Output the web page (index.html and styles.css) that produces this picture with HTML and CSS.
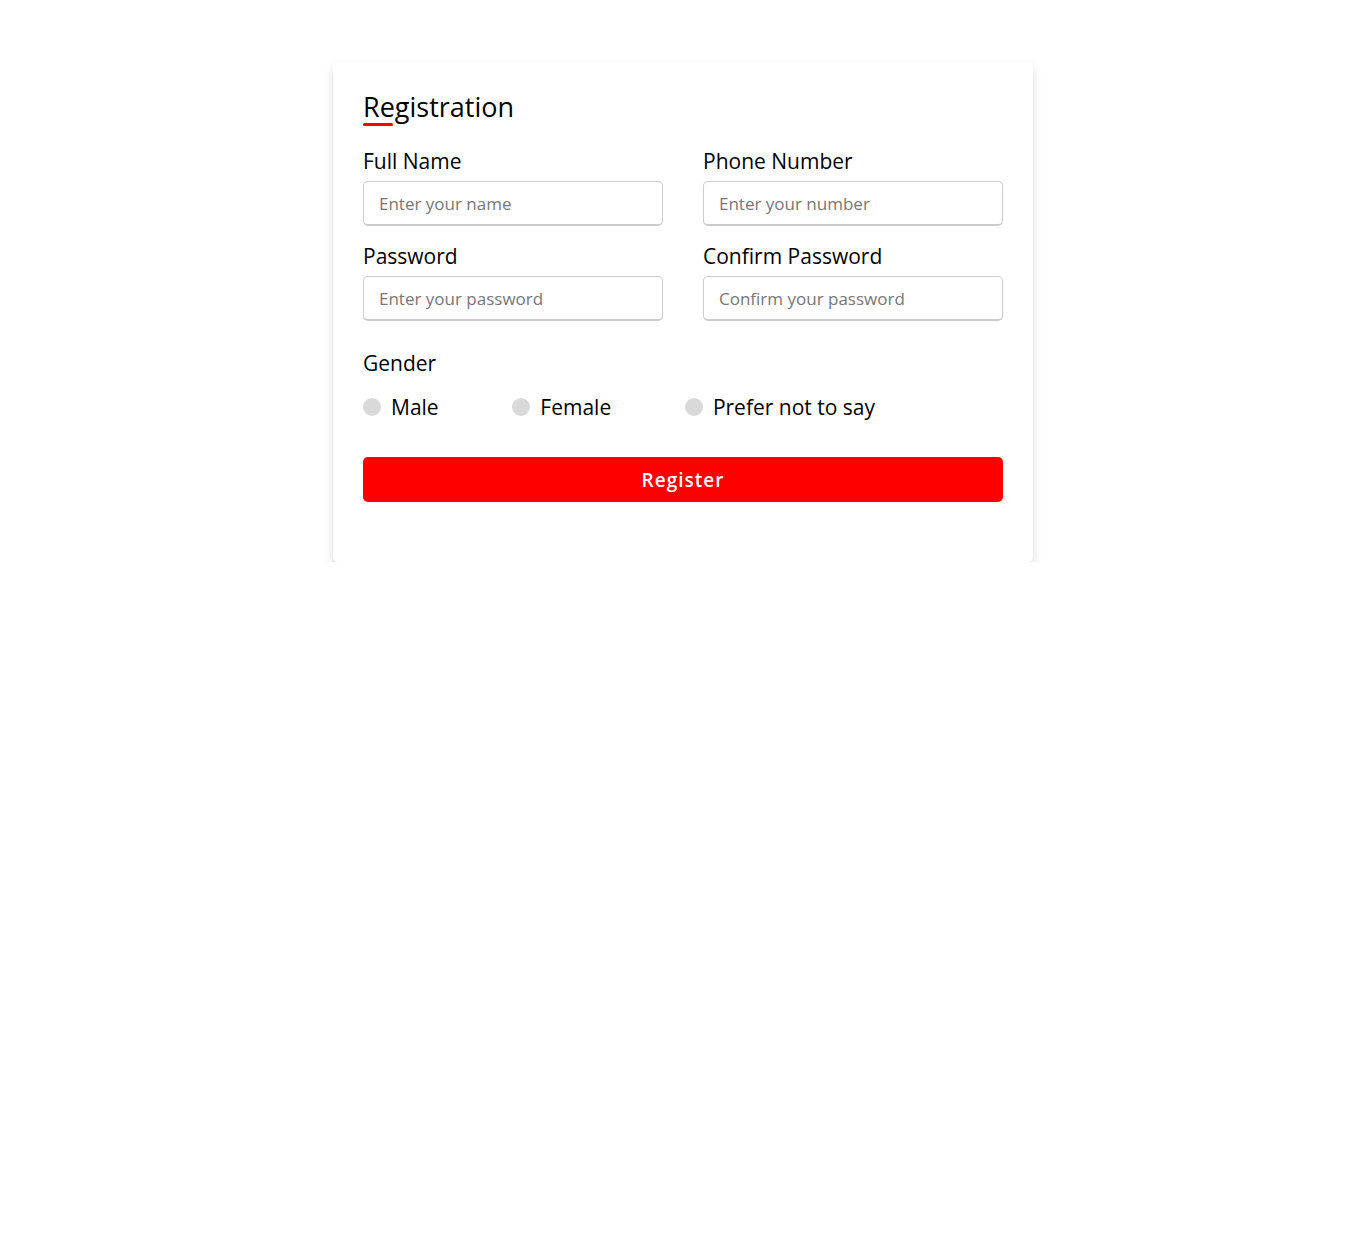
FILE: index.html
```html
<!DOCTYPE html>
<html lang="en">
<head>
<meta charset="utf-8">
<title>Registration</title>
<link rel="stylesheet" href="styles.css">
</head>
<body>
<div class="container">
  <div class="title">Registration</div>
  <form class="form" onsubmit="return false">
    <div class="user-details">
      <div class="input-box">
        <span class="details">Full Name</span>
        <input type="text" placeholder="Enter your name">
      </div>
      <div class="input-box">
        <span class="details">Phone Number</span>
        <input type="text" placeholder="Enter your number">
      </div>
      <div class="input-box">
        <span class="details">Password</span>
        <input type="text" placeholder="Enter your password">
      </div>
      <div class="input-box">
        <span class="details">Confirm Password</span>
        <input type="text" placeholder="Confirm your password">
      </div>
    </div>
    <div class="gender-details">
      <span class="gender-title">Gender</span>
      <div class="category">
        <label class="option"><span class="dot"></span><span class="gender">Male</span></label>
        <label class="option"><span class="dot"></span><span class="gender">Female</span></label>
        <label class="option"><span class="dot"></span><span class="gender">Prefer not to say</span></label>
      </div>
    </div>
    <div class="button">
      <button type="button">Register</button>
    </div>
  </form>
</div>
</body>
</html>
```
FILE: styles.css
```css
* {
  margin: 0;
  padding: 0;
  box-sizing: border-box;
}
body {
  background: #fff;
  font-family: "Open Sans", "Noto Sans", sans-serif;
  color: #000;
  padding-top: 62px;
}
.container {
  width: 700px;
  margin: 0 auto;
  background: #fff;
  padding: 25px 30px;
  border-radius: 5px;
  box-shadow: 0 5px 10px rgba(0, 0, 0, 0.15);
}
.title {
  position: relative;
  font-size: 27px;
  font-weight: 500;
  line-height: 39px;
}
.title::before {
  content: "";
  position: absolute;
  left: 0;
  bottom: 0;
  width: 30px;
  height: 3px;
  border-radius: 2px;
  background: #ff0000;
}
.user-details {
  display: flex;
  flex-wrap: wrap;
  justify-content: space-between;
  margin: 20px 0 12px 0;
}
.input-box {
  width: 300px;
  margin-bottom: 15px;
}
.details {
  display: block;
  font-size: 21px;
  font-weight: 500;
  line-height: 30px;
  margin-bottom: 5px;
}
.input-box input {
  display: block;
  width: 100%;
  height: 45px;
  outline: none;
  font-family: inherit;
  font-size: 17px;
  color: #000;
  padding-left: 15px;
  border-radius: 5px;
  border: 1px solid #ccc;
  border-bottom-width: 2px;
  background: #fff;
}
.input-box input::placeholder {
  color: #777;
}
.gender-title {
  display: block;
  font-size: 21px;
  font-weight: 500;
  line-height: 30px;
}
.category {
  display: flex;
  width: 80%;
  margin: 14px 0;
  justify-content: space-between;
}
.option {
  display: flex;
  align-items: center;
  cursor: pointer;
}
.dot {
  width: 18px;
  height: 18px;
  margin-right: 10px;
  border-radius: 50%;
  background: #d9d9d9;
}
.gender {
  font-size: 21px;
  line-height: 30px;
}
.button {
  margin: 35px 0;
}
.button button {
  display: block;
  width: 100%;
  height: 45px;
  border: none;
  border-radius: 5px;
  background: #ff0000;
  color: #fff;
  font-family: inherit;
  font-size: 19px;
  font-weight: 600;
  letter-spacing: 1px;
  cursor: pointer;
}
```
